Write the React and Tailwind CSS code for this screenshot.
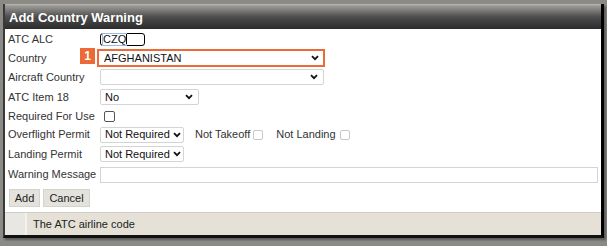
import React from "react";

const Chevron = ({ className = "" }) => (
  <svg width="8" height="6" viewBox="0 0 8 6" className={className}>
    <path d="M1 1.2 L4 4.2 L7 1.2" fill="none" stroke="#111" strokeWidth="1.8" />
  </svg>
);

const Select = ({ value, w, h = "h-[16px]", extra = "", chevronPad = "pr-[5px]" }) => (
  <div className={`flex items-center justify-between bg-white border border-[#d4d4d4] rounded-[2px] pl-[4px] ${chevronPad} ${w} ${h} ${extra}`}>
    <span className="text-[11px] leading-none text-[#111]">{value}</span>
    <Chevron />
  </div>
);

const Row = ({ label, h, children }) => (
  <div className={`flex items-center ${h}`}>
    <div className="w-[92px] shrink-0 text-[11px] text-[#333] leading-none">{label}</div>
    {children}
  </div>
);

export default function App() {
  return (
    <div
      className="w-[607px] h-[246px] bg-[#8b8a85] overflow-hidden pt-[4px] pl-[3px]"
      style={{ fontFamily: '"Liberation Sans", Arial, sans-serif' }}
    >
      <div className="w-[601px] h-[234px] flex flex-col border-l-2 border-l-[#3a3a3a] border-r-[3px] border-r-black border-b-[3px] border-b-[#111] shadow-[2px_2px_2px_rgba(0,0,0,0.35)] bg-white">
        <div className="h-[25px] shrink-0 flex items-center pl-[4px] border-t border-t-[#b5b4b0] bg-gradient-to-b from-[#a3a29e] via-[#4d4d4d] to-[#2c2c2c]">
          <span className="text-white font-bold text-[13px] leading-none">Add Country Warning</span>
        </div>
        <div className="flex-1 bg-white pl-[3px] relative">
          <Row label="ATC ALC" h="h-[20px]">
            <div className="w-[45px] h-[13px] border-[1.5px] border-black rounded-[3px] flex items-center pl-[2px] mt-[0px]">
              <span className="text-[11px] leading-none text-[#111] outline outline-1 outline-[#9bb7e0]">CZQ</span>
              <span className="w-px h-[10px] bg-black" />
            </div>
          </Row>
          <Row label="Country" h="h-[18px]">
            <div className="-ml-[3px] w-[228px] h-[18px] border-2 border-[#ec6a35] flex items-center justify-between pl-[5px] pr-[4px] bg-white">
              <span className="text-[11px] leading-none text-[#111]">AFGHANISTAN</span>
              <Chevron />
            </div>
          </Row>
          <Row label="Aircraft Country" h="h-[20px]">
            <Select value="" w="w-[224px]" />
          </Row>
          <Row label="ATC Item 18" h="h-[20px]">
            <Select value="No" w="w-[99px]" />
          </Row>
          <Row label="Required For Use" h="h-[18px]">
            <div className="ml-[4px] w-[11px] h-[11px] border border-[#555] rounded-[2px] bg-white" />
          </Row>
          <Row label="Overflight Permit" h="h-[19px]">
            <Select value="Not Required" w="w-[84px]" chevronPad="pr-[2px]" />
            <span className="ml-[11px] text-[11px] leading-none text-[#333]">Not Takeoff</span>
            <div className="ml-[3px] w-[10px] h-[10px] border border-[#c8c8c8] rounded-[2px] bg-white" />
            <span className="ml-[13px] text-[11px] leading-none text-[#333]">Not Landing</span>
            <div className="ml-[4px] w-[10px] h-[10px] border border-[#c8c8c8] rounded-[2px] bg-white" />
          </Row>
          <Row label="Landing Permit" h="h-[20px]">
            <Select value="Not Required" w="w-[84px]" chevronPad="pr-[2px]" />
          </Row>
          <Row label="Warning Message" h="h-[21px]">
            <div className="w-[498px] h-[16px] border border-[#d4d4d4] bg-white" />
          </Row>
          <div className="flex gap-[3px] pt-[4px] pl-[1px]">
            <div className="w-[31px] h-[18px] bg-[#e4e2dc] border border-[#d6d3cc] flex items-center justify-center text-[11px] text-[#222] leading-none">Add</div>
            <div className="w-[47px] h-[18px] bg-[#e4e2dc] border border-[#d6d3cc] flex items-center justify-center text-[11px] text-[#222] leading-none">Cancel</div>
          </div>
          <div className="absolute left-[75px] top-[19px] w-[15px] h-[16px] bg-[#ec6a35] flex items-center justify-center text-white font-bold text-[12px] leading-none">1</div>
        </div>
        <div className="h-[23px] shrink-0 flex border-t border-t-[#d0cdc6] bg-[#e5e1d7]">
          <div className="w-[22px] bg-[#e9e7e1] border-r-2 border-r-[#f4f2ee]" />
          <div className="flex items-center pl-[6px] text-[11px] text-[#222] leading-none">The ATC airline code</div>
        </div>
      </div>
    </div>
  );
}
